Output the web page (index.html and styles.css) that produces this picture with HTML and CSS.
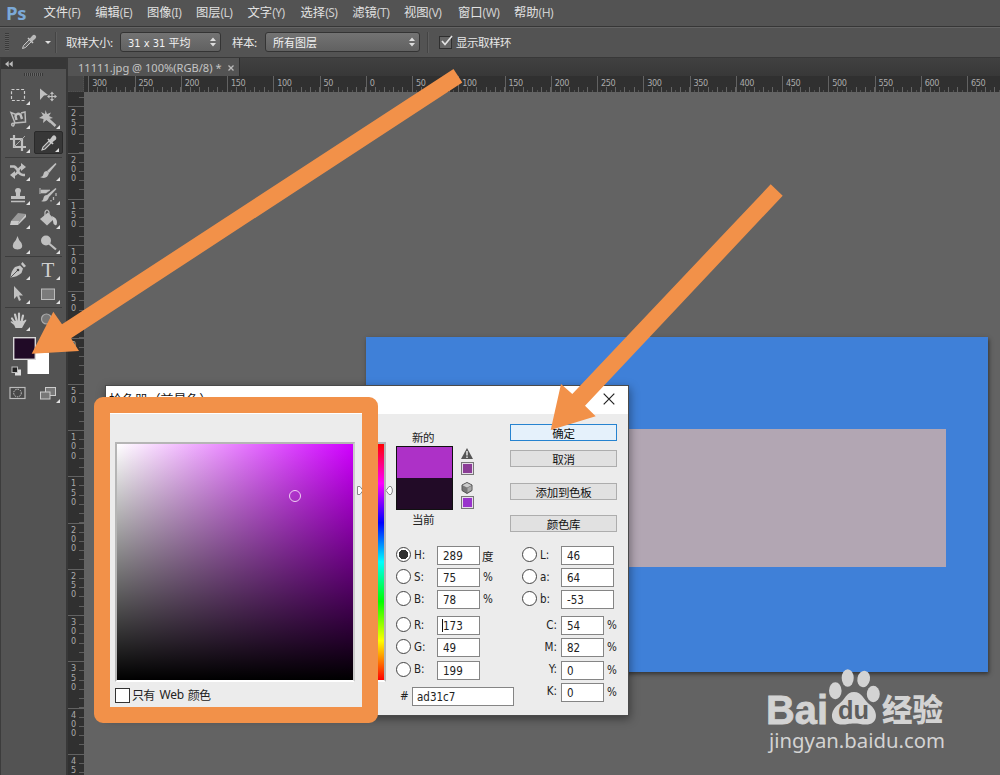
FILE: index.html
```html
<!DOCTYPE html>
<html lang="zh-CN">
<head>
<meta charset="utf-8">
<title>Ps</title>
<link rel="stylesheet" href="styles.css">
</head>
<body>
<div class="app">
  <nav class="menubar">
    <span class="logo">Ps</span>
    <span class="m w1">文件<i>(F)</i></span><span class="m w1">编辑<i>(E)</i></span><span class="m w0">图像<i>(I)</i></span><span class="m w1">图层<i>(L)</i></span><span class="m w2">文字<i>(Y)</i></span><span class="m w1">选择<i>(S)</i></span><span class="m w1">滤镜<i>(T)</i></span><span class="m w3">视图<i>(V)</i></span><span class="m w4">窗口<i>(W)</i></span><span class="m">帮助<i>(H)</i></span>
  </nav>
  <div class="options">
    <span class="grip"></span>
    <svg class="dropper" width="16" height="16" viewBox="0 0 16 16"><path d="M1.500 14.500 2.500 11.500 8.500 5.500 10.500 7.500 4.500 13.500Z" fill="#666" stroke="#c6c6c6" stroke-width="1"/><path d="M7 4 12 9" stroke="#c6c6c6" stroke-width="1.600"/><path d="M8.500 5 11 2Q13 0 14.500 1.500T14 5L11 7.500Z" fill="#b9b9b9"/></svg>
    <span class="caret"></span>
    <span class="vsep"></span>
    <span class="opt-label size">取样大小:</span>
    <span class="select narrow">31 x 31 平均<svg width="6" height="10" viewBox="0 0 6 10"><path d="M0 4 3 .5 6 4ZM0 6 3 9.500 6 6Z" fill="#ddd"/></svg></span>
    <span class="opt-label sample">样本:</span>
    <span class="select wide">所有图层<svg width="6" height="10" viewBox="0 0 6 10"><path d="M0 4 3 .5 6 4ZM0 6 3 9.500 6 6Z" fill="#ddd"/></svg></span>
    <span class="vsep second"></span>
    <span class="check"><svg width="14" height="14" viewBox="0 0 14 14"><path d="M3 6 6 9.500 13 1" fill="none" stroke="#e2e2e2" stroke-width="1.700"/></svg></span>
    <span class="opt-label">显示取样环</span>
  </div>
  <div class="workspace">
    <aside class="toolbox">
      <div class="collapse"><svg width="8" height="6" viewBox="0 0 8 6"><path d="M3.700 0V6L0 3ZM7.700 0V6L4 3Z" fill="#bbb"/></svg></div>
      <div class="handle"></div>
      <div class="tools first">
        <span class="tool"><svg viewBox="0 0 24 24"><rect x="5.500" y="6.500" width="13" height="11" fill="none" stroke="#ccc" stroke-width="1.200" stroke-dasharray="3 1.800"/></svg></span>
        <span class="tool plain"><svg viewBox="0 0 24 24"><path d="M4 5.500 12 12 8 12.500 4 17Z" fill="#c0c0c0"/><path d="M16 10v7M12.500 13.500h7" stroke="#c0c0c0" stroke-width="1.200"/><path d="M16 8.500 14 11h4ZM16 18.500 14 16h4ZM11 13.500l2.500-2v4ZM21 13.500l-2.500-2v4Z" fill="#c0c0c0"/></svg></span>
        <span class="tool"><svg viewBox="0 0 24 24"><path d="M9 16 5 5.500 10 7.500M15 6 19 5 19.500 15 9 16Q4.500 16 6 18.500 8 20 8.500 16" fill="none" stroke="#bbb" stroke-width="1.500"/><path d="M10.500 13 9.500 9Q11 5.500 14.500 7.500L16 12" fill="none" stroke="#c0c0c0" stroke-width="2.400"/></svg></span>
        <span class="tool"><svg viewBox="0 0 24 24"><path d="M9.500 3 11 7 15 5.500 13 9 17 11 13 12 14 16 10.500 13 7 16 7.500 12 3 11 7 8.500 5 5 9 7Z" fill="#bcbcbc"/><path d="M12 12 19.500 19" stroke="#bcbcbc" stroke-width="2.600"/></svg></span>
        <span class="tool"><svg viewBox="0 0 24 24"><path d="M8 4V16H20M4 8H16V20" fill="none" stroke="#c0c0c0" stroke-width="2.200"/><path d="M8 16 19 5" stroke="#aaa"/></svg></span>
        <span class="tool active"><svg viewBox="0 0 24 24"><path d="M5 19 6 16 12 10 14 12 8 18Z" fill="#555" stroke="#ccc" stroke-width="1.100"/><path d="M11 8 16 13" stroke="#ccc" stroke-width="1.700"/><path d="M12.500 9 15.500 5Q17 3.500 18.500 5T19 8.500L15 11.500Z" fill="#c6c6c6"/></svg></span>
      </div>
      <div class="tools second">
        <span class="tool"><svg viewBox="0 0 24 24"><path d="M4 7.500H8Q10 8 12 12T17 16H19M8 16Q10 16 12 12T16 8" fill="none" stroke="#c0c0c0" stroke-width="2.400"/><path d="M15 4 20 8 15 12ZM9 12 4 16 9 20Z" fill="#c0c0c0"/></svg></span>
        <span class="tool"><svg viewBox="0 0 24 24"><path d="M19.500 4 11 12 13 14 20.500 5Z" fill="#c0c0c0"/><path d="M11 12Q8 12 7.500 15T4 18Q11 21 13 14Z" fill="#c0c0c0"/></svg></span>
        <span class="tool"><svg viewBox="0 0 24 24"><path d="M9 8a3 3 0 1 1 6 0Q13.500 10 14 13H19V16H5V13H10Q10.500 10 9 8ZM5 17.800H19V19.300H5Z" fill="#c0c0c0"/></svg></span>
        <span class="tool"><svg viewBox="0 0 24 24"><path d="M19.500 5 11 12 13 14 20.500 6ZM11 12Q8 12 7.500 15T5 18Q11 20 13 14Z" fill="#c0c0c0"/><path d="M5 7H14L10 10H5ZM4 5V11Z" fill="#c0c0c0" stroke="#c0c0c0" stroke-width=".6"/><path d="M15 17v1.500M17.500 14v3M20 10v3" stroke="#b5b5b5" fill="none" stroke-width="1.300"/></svg></span>
        <span class="tool"><svg viewBox="0 0 24 24"><path d="M5 14 12 6 20 7 13 15Z" fill="#999"/><path d="M5 14H13L12 18H4ZM13 15 20 7V10L12 18Z" fill="#c8c8c8"/></svg></span>
        <span class="tool"><svg viewBox="0 0 24 24"><path d="M4 12 12 5.500 18 12 11 18.500Z" fill="#c0c0c0"/><path d="M9 12V5Q11 1 13 5V10" fill="none" stroke="#c0c0c0" stroke-width="1.200"/><path d="M16 9Q21 11 21 15T19 18 17 14Z" fill="#c8c8c8"/></svg></span>
        <span class="tool"><svg viewBox="0 0 24 24"><path d="M11.500 5Q12.500 9 15.500 12 18 18 11.500 18.500 5 18 7.500 12 10.500 9 11.500 5Z" fill="#c0c0c0"/></svg></span>
        <span class="tool"><svg viewBox="0 0 24 24"><circle cx="10" cy="9.500" r="5" fill="#c0c0c0"/><path d="M13 12.500 20 18.500" stroke="#c0c0c0" stroke-width="2.200"/></svg></span>
      </div>
      <div class="tools third">
        <span class="tool"><svg viewBox="0 0 24 24"><path d="M4.500 19.500Q5 13 9 9L14 7.500 17 10.500 15.500 15Q11 19 4.500 19.500Z" fill="#c4c4c4"/><path d="M15 6 16.500 4 20 8 18 9.500Z" fill="#c4c4c4"/><path d="M5 19 12 12" stroke="#555"/><circle cx="12" cy="12" r="1.300" fill="#444"/></svg></span>
        <span class="tool"><b>T</b></span>
        <span class="tool"><svg viewBox="0 0 24 24"><path d="M8 4V17L11 14 13 19 15 18 13 13.500H17Z" fill="#c0c0c0"/></svg></span>
        <span class="tool"><svg viewBox="0 0 24 24"><rect x="5.500" y="7" width="13" height="10.500" fill="#7b7b7b" stroke="#bbb"/></svg></span>
      </div>
      <div class="tools fourth">
        <span class="tool"><svg viewBox="0 0 24 24"><path d="M6 9.500 9 14M9 5.500 11 13M13 4.500V13M17 6.500 15.500 13" stroke="#c8c8c8" stroke-width="2.200" stroke-linecap="round"/><path d="M8.500 12H17L20 10.500Q21 11 19 13.500L16 19H9.500Q8 15 4.500 13 5 11 8.500 14Z" fill="#c8c8c8"/></svg></span>
        <span class="tool plain"><svg viewBox="0 0 24 24"><circle cx="10.500" cy="10" r="5" fill="#777" stroke="#aaa" stroke-width="1.200"/></svg></span>
      </div>
      <div class="colors">
        <svg width="60" height="40" viewBox="0 0 60 40"><rect x="23.500" y="15.500" width="21.500" height="21.500" fill="#fff"/><rect x="9.700" y=".700" width="21.600" height="21.600" fill="#200a26" stroke="#d8d8d8" stroke-width="1.400"/><rect x="11" y="32.500" width="6" height="6" fill="#ddd"/><rect x="8" y="30" width="5.500" height="5.500" fill="#222" stroke="#bbb"/></svg>
      </div>
      <div class="tools modes">
        <span class="tool plain"><svg viewBox="0 0 24 24"><rect x="4" y="6.500" width="15" height="11" fill="#484848" stroke="#bbb" stroke-width="1.200"/><circle cx="11.500" cy="12" r="3.800" fill="none" stroke="#ccc" stroke-dasharray="1.500 1"/></svg></span>
        <span class="tool"><svg viewBox="0 0 24 24"><rect x="9.500" y="6.500" width="10" height="8" fill="#777" stroke="#ccc"/><rect x="4.500" y="11" width="9.500" height="7" fill="#777" stroke="#ccc"/></svg></span>
      </div>
    </aside>
    <main class="document">
      <div class="tabs"><div class="tab">11111.jpg @ 100%(RGB/8) *<svg width="6" height="6" viewBox="0 0 6 6"><path d="M.5 .5 5.500 5.500M5.500 .5 .5 5.500" stroke="#bbb" stroke-width="1.300"/></svg></div></div>
      <div class="ruler-h"><span class="corner"></span><div class="marks-h"><span>300</span><span>250</span><span>200</span><span>150</span><span>100</span><span>50</span><span>0</span><span>50</span><span>100</span><span>150</span><span>200</span><span>250</span><span>300</span><span>350</span><span>400</span><span>450</span><span>500</span><span>550</span><span>600</span><span>650</span></div></div>
      <div class="lower">
        <div class="ruler-v"><span>2<br>5<br>0</span><span>2<br>0<br>0</span><span>1<br>5<br>0</span><span>1<br>0<br>0</span><span>5<br>0</span><span>0</span><span>5<br>0</span><span>1<br>0<br>0</span><span>1<br>5<br>0</span><span>2<br>0<br>0</span><span>2<br>5<br>0</span><span>3<br>0<br>0</span><span>3<br>5<br>0</span><span>4<br>0<br>0</span><span>4<br>5</span></div>
        <div class="canvas"><div class="image"><div class="panel"></div></div></div>
      </div>
    </main>
  </div>

  <section class="dialog">
    <header class="title"><span>拾色器（前景色）</span><svg width="12" height="12" viewBox="0 0 12 12"><path d="M.7 .7 11.300 11.300M11.300 .7 .7 11.300" stroke="#222" stroke-width="1.200"/></svg></header>
    <div class="body">
      <div class="picker">
        <div class="field"><span class="marker"></span></div>
        <div class="web"><span class="box"></span>只有 <span class="lat">Web</span> 颜色</div>
      </div>
      <div class="hue">
        <svg width="38" height="11" viewBox="0 0 38 11"><path d="M5 9.500H2.500V1.500H5L8 5.500ZM31 5.500 34 1.500H36L37.300 4V7L36 9.500H34Z" fill="#fff" stroke="#888"/></svg>
        <div class="strip"></div>
      </div>
      <div class="side">
        <div class="top">
          <div class="preview"><span>新的</span><div class="swatch"><i></i></div><span>当前</span></div>
          <div class="warn">
            <svg width="12" height="11" viewBox="0 0 12 11"><path d="M6 0 12 11H0Z" fill="#555"/><path d="M6 3V7.500M6 8.500V10" stroke="#eee" stroke-width="1.400"/></svg>
            <span class="chip gamut"></span>
            <svg class="cube" width="12" height="12" viewBox="0 0 12 12"><path d="M6 .5 11 3V8.500L6 11.500 1 8.500V3Z" fill="#777" stroke="#555"/><path d="M1.500 3.300 6 1 10.500 3.300 6 5.500Z" fill="#ccc"/><path d="M6.500 6 10.500 4V8L6.500 10.500Z" fill="#aaa"/></svg>
            <span class="chip websafe"></span>
          </div>
          <div class="buttons"><div class="btn ok">确定</div><div class="btn">取消</div><div class="btn gap">添加到色板</div><div class="btn gap">颜色库</div></div>
        </div>
        <div class="forms">
          <div class="left">
            <div class="row"><i class="radio on"></i><label>H:</label><b>289</b><em class="deg">度</em></div>
            <div class="row"><i class="radio"></i><label>S:</label><b>75</b><em>%</em></div>
            <div class="row"><i class="radio"></i><label>B:</label><b>78</b><em>%</em></div>
            <div class="row group"><i class="radio"></i><label>R:</label><b class="cursor">173</b></div>
            <div class="row"><i class="radio"></i><label>G:</label><b>49</b></div>
            <div class="row"><i class="radio"></i><label>B:</label><b>199</b></div>
            <div class="row hex"><label>#</label><b>ad31c7</b></div>
          </div>
          <div class="right">
            <div class="row lab"><i class="radio"></i><label>L:</label><b>46</b></div>
            <div class="row lab"><i class="radio"></i><label>a:</label><b>64</b></div>
            <div class="row lab"><i class="radio"></i><label>b:</label><b>-53</b></div>
            <div class="row group"><label>C:</label><b>54</b><em>%</em></div>
            <div class="row"><label>M:</label><b>82</b><em>%</em></div>
            <div class="row"><label>Y:</label><b>0</b><em>%</em></div>
            <div class="row"><label>K:</label><b>0</b><em>%</em></div>
          </div>
        </div>
      </div>
    </div>
  </section>

  <div class="highlight"></div>
  <svg class="overlay" width="1000" height="775" viewBox="0 0 1000 775">
    <g fill="#f29149">
      <path d="M453.500 69 462.300 82.500 71 338.300 79 351 31.700 353.700 53.300 311.700 62 324.300Z"/>
      <path d="M770.700 184.300 782.700 195.700 585 405.700 595.700 416.300 550.700 430 561 384 572.300 394Z"/>
    </g>
    <g fill="#d3d3d3">
      <text class="wm-bai" x="766" y="723.500" textLength="62" lengthAdjust="spacingAndGlyphs">Bai</text>
      <ellipse cx="835.300" cy="690.700" rx="6.300" ry="8.500"/>
      <ellipse cx="847.700" cy="678" rx="6" ry="8.700"/>
      <ellipse cx="863.700" cy="679" rx="6.300" ry="8.300" transform="rotate(12 863.700 679)"/>
      <ellipse cx="873.300" cy="694" rx="6.500" ry="8.300"/>
      <path d="M854 692C862 692 864 700 869 704 878 710 879 723 868 724.500 862 725 860 723.500 854 723.500S846 725 840 724.500C830 723 829 711 839 704 845 700 846 692 854 692Z"/>
      <text class="wm-du" x="838" y="719" textLength="31" lengthAdjust="spacingAndGlyphs">du</text>
      <text class="wm-cn" x="882" y="721" textLength="61" lengthAdjust="spacingAndGlyphs">经验</text>
      <text class="wm-url" x="769" y="747.500" textLength="176" lengthAdjust="spacingAndGlyphs">jingyan.baidu.com</text>
    </g>
  </svg>
</div>
</body>
</html>
```
FILE: styles.css
```css
* { box-sizing: border-box; }
body { margin: 0; background: #636363; font-family: "Noto Sans", "Noto Sans CJK SC", sans-serif; font-size: 12px; }
i, em { font-style: normal; }
.app { position: relative; width: 1000px; height: 775px; overflow: hidden; display: flex; flex-direction: column; }

.menubar { height: 27px; flex: none; display: flex; align-items: center; background: #535353; border-bottom: 1px solid #363636; color: #e2e2e2; padding-left: 6px; line-height: 24px; }
.logo { width: 37.500px; font: bold 18.500px/24px "Open Sans", sans-serif; color: #7ba9d8; letter-spacing: -0.300px; }
.m { width: 52px; white-space: nowrap; margin-top: -2px; font: 12.300px/24px "Noto Sans CJK SC", sans-serif; }
.m i { font: 12px/20px "Noto Sans", sans-serif; letter-spacing: -0.500px; color: #cfcfcf; }
.w0 { width: 49px; }
.w2 { width: 53px; }
.w1 { width: 51.700px; }
.w3 { width: 54px; }
.w4 { width: 56px; }

.options { height: 31px; flex: none; display: flex; align-items: center; background: #535353; border-top: 1px solid #646464; border-bottom: 1px solid #383838; color: #e8e8e8; padding: 0 0 1px 5px; white-space: nowrap; }
.grip { width: 4px; height: 18px; background: repeating-linear-gradient(#3a3a3a 0 1px, #5d5d5d 1px 2px); }
.dropper { margin-left: 12px; }
.caret { margin-left: 8px; border: 3px solid transparent; border-top-color: #e0e0e0; border-bottom: 0; }
.vsep { width: 2px; height: 21px; margin-left: 4px; background: #444; border-right: 1px solid #5e5e5e; }
.opt-label { font-family: "Noto Sans CJK SC", sans-serif; font-size: 11.500px; letter-spacing: -0.500px; line-height: 18px; }
.size { margin-left: 9px; width: 54px; }
.sample { margin-left: 11px; width: 33px; }
.select { height: 20px; display: flex; align-items: center; justify-content: space-between; padding: 0 4px 0 7px; font-family: "DejaVu Sans Condensed", "Noto Sans CJK SC", sans-serif; font-size: 11px; border: 1px solid #343434; border-radius: 3px; background: linear-gradient(#737373, #616161); color: #f2f2f2; }
.narrow { width: 101px; }
.wide { width: 155px; }
.second { margin-left: 7px; }
.check { width: 13px; height: 13px; margin: 0 4px 0 10px; border: 1px solid #2f2f2f; background: #656565; }
.check svg { display: block; margin: -2px 0 0 -1px; overflow: visible; }

.workspace { flex: 1; display: flex; min-height: 0; }
.toolbox { width: 68px; flex: none; background: #535353; border-left: 1px solid #3c3c3c; border-right: 2px solid #383838; }
.collapse { height: 11px; background: #373737; padding: 0 0 0 4px; line-height: 0; }
.collapse svg { margin-top: 3px; }
.handle { width: 19px; height: 3px; margin: 4px 0 0 23px; background: repeating-linear-gradient(90deg, #383838 0 1px, #666 1px 2px); }
.tools { display: grid; grid-template-columns: 31px 30px; grid-auto-rows: 24px; padding-left: 1px; }
.first { padding-top: 7px; height: 81px; }
.second.tools { padding-top: 2px; margin: 0; height: 99px; grid-auto-rows: 24.200px; }
.third, .second.tools, .fourth { background: linear-gradient(#3d3d3d, #3d3d3d) 4px 0 / 57px 1px no-repeat; }
.third { padding-top: 2px; height: 51px; }
.fourth { padding-top: 2px; height: 30px; }
.tool { position: relative; display: flex; align-items: center; justify-content: center; height: 23px; }
.tool svg { width: 24px; height: 24px; }
.tool::after { content: ""; position: absolute; right: 3px; bottom: 1px; border: 2px solid #e0e0e0; border-top-color: transparent; border-left-color: transparent; }
.plain::after { display: none; }
.tool b { font: 21px/22px "Liberation Serif", serif; color: #d0d0d0; }
.active { background: #373737; border: 1px solid #2a2a2a; border-radius: 2px; margin-left: 1px; }
.colors { padding-left: 3px; height: 44px; line-height: 0; }
.modes { padding-top: 0; }

.document { flex: 1; display: flex; flex-direction: column; min-width: 0; }
.tabs { height: 18px; flex: none; background: linear-gradient(#414141, #383838); }
.tab { width: 172px; height: 18px; background: #535353; color: #c4c4c4; padding-left: 10px; font: 11.100px/20px "Noto Sans", sans-serif; white-space: nowrap; border-right: 1px solid #2e2e2e; }
.tab svg { margin: 0 0 1px 6px; }
.ruler-h { height: 16px; flex: none; display: flex; background: #303030; }
.corner { width: 16px; flex: none; background: #464646; border: 1px dotted #505050; border-width: 0 1px 1px 0; }
.marks-h { flex: 1; display: flex; overflow: hidden; padding-left: 4.300px; background: repeating-linear-gradient(90deg, #646464 0 1px, transparent 1px 9.250px) 4.300px 11px / 100% 5px no-repeat, repeating-linear-gradient(90deg, #525252 0 1px, transparent 1px 4.625px) 4.300px 14px / 100% 2px no-repeat; }
.marks-h span { width: 46.250px; flex: none; height: 16px; border-left: 1px solid #626262; padding-left: 3px; font: 9px/14px "DejaVu Sans Condensed", sans-serif; letter-spacing: -0.400px; color: #aaa; }
.lower { flex: 1; display: flex; min-height: 0; }
.ruler-v { width: 16px; flex: none; overflow: hidden; padding-top: 14.300px; background: repeating-linear-gradient(#5e5e5e 0 1px, transparent 1px 9.250px) 11px 5px / 5px 100% no-repeat, #303030; }
.ruler-v span { display: block; height: 46.250px; border-top: 1px solid #626262; padding: 2px 0 0 3px; font: 9px/9.300px "DejaVu Sans Condensed", sans-serif; color: #aaa; }
.ruler-v span:last-child { height: 21px; }
.canvas { flex: 1; background: #636363; padding: 245px 12px 0 282px; }
.image { height: 335px; background: #3f80d8; padding: 92px 42px 0 100px; box-shadow: 1px 2px 4px #333; }
.panel { height: 138px; background: #b2a6b3; }

.dialog { position: absolute; left: 105px; top: 385px; width: 524px; height: 331px; background: #ececec; border: 1px solid #4a4a4a; box-shadow: 1px 3px 9px rgba(0,0,0,.4); color: #222; }
.title { height: 28px; background: #fff; display: flex; justify-content: space-between; padding: 3px 13px 0 3px; font: 12.900px/20px "Noto Sans CJK SC", sans-serif; color: #111; }
.title svg { margin-top: 4px; }
.body { display: flex; padding-left: 9px; }
.picker { width: 240px; padding-top: 28px; }
.field { height: 240px; border: 2px solid #b5b5b5; border-right-color: #ccc; border-bottom-color: #fff; background: linear-gradient(to top, #000, transparent), linear-gradient(to right, #fff, #d000ff); background-origin: padding-box; }
.marker { display: block; width: 12px; height: 12px; border: 1.500px solid #f0d0f4; border-radius: 50%; margin: 46px 0 0 172px; }
.web { display: flex; align-items: center; gap: 2px; padding-top: 5px; font: 12px/16px "Noto Sans CJK SC", sans-serif; letter-spacing: -0.700px; }
.lat { font: 12px/16px "Noto Sans", sans-serif; letter-spacing: -0.300px; margin: 0 2px 0 3px; }
.box { width: 15px; height: 15px; background: #fff; border: 1px solid #333; }
.hue { position: relative; width: 41px; padding: 28px 10px 0 9px; }
.hue svg { position: absolute; left: 0; top: 71px; }
.strip { width: 22px; height: 240px; border: 2px solid #b5b5b5; border-bottom-color: #fff; background: linear-gradient(#f00, #f0f, #00f, #0ff, #0f0, #ff0, #f00); }
.side { flex: 1; display: flex; flex-direction: column; }
.top { height: 132px; display: flex; }
.preview { width: 57px; padding-top: 14px; display: flex; flex-direction: column; align-items: center; font: 11.500px/18px "Noto Sans CJK SC", sans-serif; }
.preview span { letter-spacing: -0.500px; margin-right: 3px; }
.swatch { width: 57px; height: 64px; border: 1px solid #111; background: #220b27; }
.swatch i { display: block; height: 31px; background: #ad31c7; }
.warn { width: 58px; padding: 34px 0 0 8px; display: flex; flex-direction: column; align-items: flex-start; }
.cube { margin-top: 7px; }
.chip { width: 13px; height: 13px; border: 1px solid #777; box-shadow: inset 0 0 0 1px #e5dce8; margin-top: 3px; }
.warn .websafe { margin-top: 2px; background: #9933cc; }
.gamut { background: #8b3c96; }
.buttons { width: 107px; padding-top: 10px; margin-left: -1px; }
.btn { height: 17px; margin-bottom: 9px; border: 1px solid #adadad; background: #e1e1e1; text-align: center; font: 11.500px/17px "Noto Sans CJK SC", sans-serif; letter-spacing: -0.300px; color: #111; }
.ok { background: #e5f1fb; border-color: #2683d0; }
.gap { margin-top: 15.500px; margin-bottom: 0; }
.forms { display: flex; padding-top: .6px; }
.left { width: 125px; }
.right { width: 106px; }
.row { height: 18px; margin-bottom: 4.200px; display: flex; align-items: center; font: 11.500px/16px "DejaVu Sans Condensed", sans-serif; }
.row b { width: 43px; height: 19px; flex: none; border: 1px solid #858585; background: #fff; font-weight: normal; padding-left: 5px; line-height: 18px; }
.row label { width: 26px; padding-left: 3px; margin-top: -2px; white-space: nowrap; }
.row em { margin: -1px 0 0 3px; }
.row .deg { font-family: "Noto Sans CJK SC", sans-serif; margin: 0 0 0 2px; }
.radio { width: 15px; height: 15px; flex: none; border: 1px solid #444; border-radius: 50%; background: #fff; margin-top: -2px; }
.on { background: radial-gradient(circle, #303030 0 4.500px, #fff 5px); }
.group { margin-top: 7.700px; }
.cursor { background: linear-gradient(#111, #111) 4px 2px / 1px 13px no-repeat, #fff !important; }
.row.hex { margin-top: 8px; }
.hex label { width: 16px; padding-left: 4px; margin-top: 0; }
.hex b { width: 102px; padding-left: 4px; }
.right .row label { width: 40px; text-align: right; padding: 0 4px 0 0; }
.right .row.lab .radio { margin-left: 1px; }
.right .row.lab label { width: 24px; text-align: left; padding: 0 0 0 3px; }
.right .row.lab b { width: 53px; }

.highlight { position: absolute; left: 94px; top: 397px; width: 284px; height: 326px; border: 16px solid #f29149; border-radius: 9px; }
.overlay { position: absolute; left: 0; top: 0; }
.wm-bai { font: bold 40px "Liberation Sans", sans-serif; stroke: #d3d3d3; stroke-width: .8px; }
.wm-du { font: bold 25px "Liberation Sans", sans-serif; fill: #5d5d5d; }
.wm-cn { font: 900 31px "Noto Sans CJK SC", sans-serif; }
.wm-url { font: 20px "Noto Sans", sans-serif; }
```
